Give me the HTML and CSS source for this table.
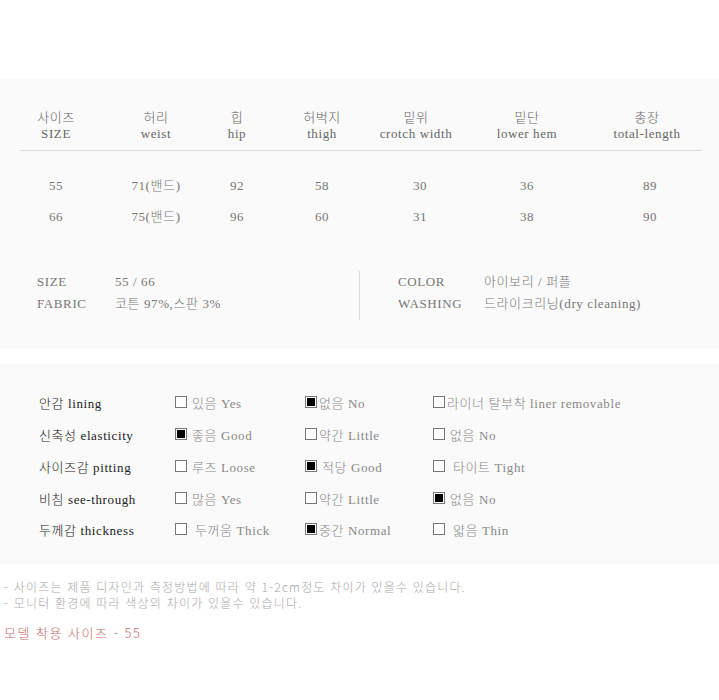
FILE: index.html
```html
<!DOCTYPE html>
<html lang="ko">
<head>
<meta charset="utf-8">
<link rel="stylesheet" href="styles.css">
</head>
<body>
<div class="top-space"></div>
<section class="spec">
  <div class="grid head">
    <div>사이즈<br>SIZE</div>
    <div>허리<br>weist</div>
    <div>힙<br>hip</div>
    <div>허벅지<br>thigh</div>
    <div>밑위<br>crotch width</div>
    <div>밑단<br>lower hem</div>
    <div>총장<br>total-length</div>
  </div>
  <div class="rule"></div>
  <div class="grid row first">
    <div>55</div><div>71(밴드)</div><div>92</div><div>58</div><div class="s4">30</div><div>36</div><div class="s3">89</div>
  </div>
  <div class="grid row">
    <div>66</div><div>75(밴드)</div><div>96</div><div>60</div><div class="s4">31</div><div>38</div><div class="s3">90</div>
  </div>
  <div class="info">
    <div class="info-col left">
      <div class="info-row"><span class="lab">SIZE</span><span>55 / 66</span></div>
      <div class="info-row"><span class="lab">FABRIC</span><span>코튼 97%,스판 3%</span></div>
    </div>
    <div class="info-col right">
      <div class="info-row"><span class="lab">COLOR</span><span>아이보리 / 퍼플</span></div>
      <div class="info-row"><span class="lab">WASHING</span><span>드라이크리닝(dry cleaning)</span></div>
    </div>
  </div>
</section>
<section class="checks">
  <div class="crow">
    <div class="clabel">안감 lining</div>
    <div class="opt"><span class="box"></span><span class="otext">있음 Yes</span></div>
    <div class="opt"><span class="box on"></span><span class="otext tight">없음 No</span></div>
    <div class="opt"><span class="box"></span><span class="otext tight">라이너 탈부착 liner removable</span></div>
  </div>
  <div class="crow">
    <div class="clabel">신축성 elasticity</div>
    <div class="opt"><span class="box on"></span><span class="otext">좋음 Good</span></div>
    <div class="opt"><span class="box"></span><span class="otext tight">약간 Little</span></div>
    <div class="opt"><span class="box"></span><span class="otext">없음 No</span></div>
  </div>
  <div class="crow">
    <div class="clabel">사이즈감 pitting</div>
    <div class="opt"><span class="box"></span><span class="otext">루즈 Loose</span></div>
    <div class="opt"><span class="box on"></span><span class="otext">적당 Good</span></div>
    <div class="opt"><span class="box"></span><span class="otext wide">타이트 Tight</span></div>
  </div>
  <div class="crow">
    <div class="clabel">비침 see-through</div>
    <div class="opt"><span class="box"></span><span class="otext">많음 Yes</span></div>
    <div class="opt"><span class="box"></span><span class="otext tight">약간 Little</span></div>
    <div class="opt"><span class="box on"></span><span class="otext">없음 No</span></div>
  </div>
  <div class="crow last">
    <div class="clabel">두께감 thickness</div>
    <div class="opt"><span class="box"></span><span class="otext wide">두꺼움 Thick</span></div>
    <div class="opt"><span class="box on"></span><span class="otext tight">중간 Normal</span></div>
    <div class="opt"><span class="box"></span><span class="otext wide">얇음 Thin</span></div>
  </div>
</section>
<div class="notes">
  <p>- 사이즈는 제품 디자인과 측정방법에 따라 약 1-2cm정도 차이가 있을수 있습니다.</p>
  <p>- 모니터 환경에 따라 색상의 차이가 있을수 있습니다.</p>
</div>
<p class="model">모델 착용 사이즈 - 55</p>
</body>
</html>
```

FILE: styles.css
```css
html, body {
  margin: 0;
  padding: 0;
  background: #ffffff;
}
body {
  font-family: "Liberation Serif", "Noto Sans CJK KR", serif;
  font-size: 13px;
  font-weight: 300;
  letter-spacing: 0.6px;
  color: #666;
}
.top-space {
  height: 79px;
}
.spec {
  background: #fafafa;
  padding: 31px 0 29px 0;
}
.grid {
  display: grid;
  grid-template-columns: 112px 88px 74px 96px 92px 130px 110px;
  text-align: center;
}
.head {
  line-height: 16px;
  color: #666;
  padding-bottom: 8px;
}
.rule {
  margin-left: 20px;
  width: 682px;
  height: 1px;
  background: #dcdcdc;
}
.row {
  line-height: 16px;
  color: #777;
  margin-top: 15px;
}
.row.first {
  margin-top: 27px;
}
.s4 { padding-left: 8px; }
.s3 { padding-left: 6px; }
.info {
  display: flex;
  margin-top: 46px;
}
.info-col {
  height: 49px;
}
.info-col.left {
  width: 322px;
  padding-left: 37px;
  border-right: 1px solid #dadada;
}
.info-col.right {
  padding-left: 38px;
}
.info-row {
  display: flex;
  line-height: 22px;
  color: #777;
}
.left .lab { width: 78px; }
.right .lab { width: 86px; }
.checks {
  margin-top: 15px;
  background: #fafafa;
  padding: 22px 0 20px 39px;
}
.crow {
  display: grid;
  grid-template-columns: 136px 130px 128px auto;
  height: 32px;
  align-items: center;
}
.crow.last {
  height: 30px;
}
.clabel {
  color: #222;
}
.opt {
  display: flex;
  align-items: center;
  color: #888;
}
.box {
  width: 10px;
  height: 10px;
  border: 1px solid #777;
  background: #fff;
  box-sizing: content-box;
  position: relative;
  flex: none;
}
.box.on::after {
  content: "";
  position: absolute;
  left: 1px;
  top: 1px;
  width: 8px;
  height: 8px;
  background: #000;
}
.otext {
  margin-left: 5px;
}
.otext.tight {
  margin-left: 2px;
}
.otext.wide {
  margin-left: 8px;
}
.notes {
  margin-top: 15px;
  padding-left: 4px;
  font-family: "Noto Sans CJK KR", "Liberation Sans", sans-serif;
  font-size: 12px;
  letter-spacing: 1.2px;
  color: #a8a8a8;
}
.notes p {
  margin: 0;
  line-height: 16px;
}
.model {
  margin: 13px 0 0 0;
  padding-left: 4px;
  font-family: "Noto Sans CJK KR", "Liberation Sans", sans-serif;
  font-size: 13px;
  letter-spacing: 1.5px;
  line-height: 18px;
  color: #c46a6a;
}
```
